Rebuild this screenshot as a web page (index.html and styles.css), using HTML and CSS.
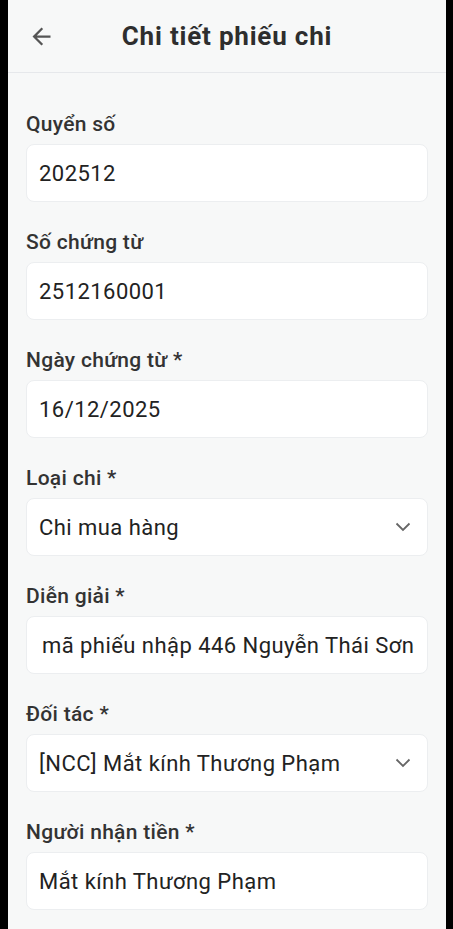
FILE: index.html
```html
<!DOCTYPE html>
<html lang="vi">
<head>
  <meta charset="UTF-8" />
  <meta name="viewport" content="width=device-width, initial-scale=1.0"/>
  <title>Chi tiết phiếu chi</title>
  <link rel="stylesheet" href="styles.css">
</head>
<body>
  <div class="screen">
    <header class="topbar">
      <button type="button" class="back-btn" aria-label="Quay lại">
        <svg width="27" height="27" viewBox="0 0 24 24"><path d="M20 11H7.83l5.59-5.59L12 4l-8 8 8 8 1.41-1.41L7.83 13H20v-2z" fill="currentColor"/></svg>
      </button>
      <h1>Chi tiết phiếu chi</h1>
      <span></span>
    </header>

    <main class="form">
      <div class="field">
        <label>Quyển số</label>
        <div class="box">202512</div>
      </div>

      <div class="field">
        <label>Số chứng từ</label>
        <div class="box">2512160001</div>
      </div>

      <div class="field">
        <label>Ngày chứng từ *</label>
        <div class="box">16/12/2025</div>
      </div>

      <div class="field">
        <label>Loại chi *</label>
        <div class="box select">
          <span>Chi mua hàng</span>
          <svg width="16" height="10" viewBox="0 0 16 10"><polyline points="1.5,1.5 8,8 14.5,1.5" fill="none" stroke="currentColor" stroke-width="1.8"/></svg>
        </div>
      </div>

      <div class="field">
        <label>Diễn giải *</label>
        <div class="box scrolled">mã phiếu nhập 446 Nguyễn Thái Sơn</div>
      </div>

      <div class="field">
        <label>Đối tác *</label>
        <div class="box select">
          <span>[NCC] Mắt kính Thương Phạm</span>
          <svg width="16" height="10" viewBox="0 0 16 10"><polyline points="1.5,1.5 8,8 14.5,1.5" fill="none" stroke="currentColor" stroke-width="1.8"/></svg>
        </div>
      </div>

      <div class="field">
        <label>Người nhận tiền *</label>
        <div class="box">Mắt kính Thương Phạm</div>
      </div>
    </main>
  </div>
</body>
</html>
```

FILE: styles.css
```css
:root {
  --fundo: #f7f8f8;
  --borda: #e6e8eb;
  --texto: #333;
  --valor: #222;
}

* {
  box-sizing: border-box;
}

body {
  margin: 0;
  background-color: #000;
  font-family: Roboto, 'Noto Sans', sans-serif;
}

.screen {
  margin: 0 7px 0 8px;
  min-height: 929px;
  background-color: var(--fundo);
  color: var(--texto);
}

.topbar {
  height: 73px;
  display: grid;
  grid-template-columns: 1fr auto 1fr;
  align-items: center;
  padding: 0 20px;
  border-bottom: 1px solid var(--borda);
}

.topbar h1 {
  margin: 0;
  font-size: 26px;
  font-weight: 700;
  letter-spacing: 0.8px;
  color: #2e2e2e;
}

.back-btn {
  justify-self: start;
  background: none;
  border: none;
  padding: 0;
  color: #555;
  display: flex;
  cursor: pointer;
}

.form {
  padding: 37px 18px 0;
  display: flex;
  flex-direction: column;
  gap: 26px;
}

.field label {
  display: block;
  font-size: 21px;
  line-height: 28px;
  font-weight: 500;
  letter-spacing: 0.3px;
  margin-bottom: 6px;
}

.box {
  height: 58px;
  display: flex;
  align-items: center;
  padding: 0 12px;
  background-color: #fff;
  border: 1px solid #eceef0;
  border-radius: 8px;
  font-size: 22px;
  letter-spacing: 0.45px;
  color: var(--valor);
  white-space: nowrap;
  overflow: hidden;
}

.box.select {
  justify-content: space-between;
  padding-right: 16px;
}

.box.select svg {
  color: #666;
  flex-shrink: 0;
}

.box.scrolled {
  padding-left: 15px;
}
```
